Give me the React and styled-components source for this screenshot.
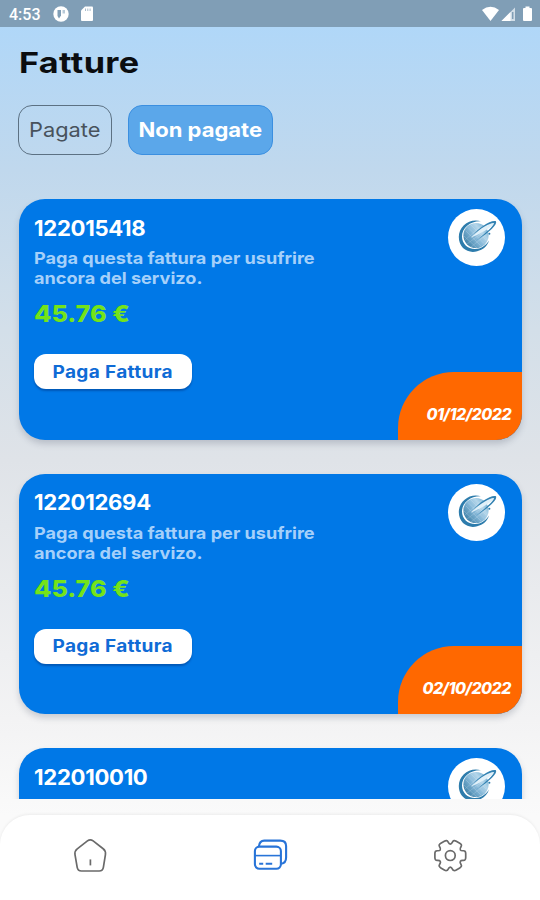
import React from 'react'
import styled, { createGlobalStyle } from 'styled-components'

const GlobalStyle = createGlobalStyle`
    * {
        box-sizing: border-box;
    }
    body {
        margin: 0;
        font-family: Inter, "Open Sans", sans-serif;
    }
`;

const Screen = styled.div`
    width: 540px;
    height: 900px;
    display: flex;
    flex-direction: column;
    overflow: hidden;
    background: linear-gradient(#b0d7f8 27px, #c0d8ed 170px, #d3dfe9 330px, #dfe3e8 460px, #f3f3f4 720px, #fafafa 815px);
`;

const StatusBar = styled.div`
    height: 27px;
    flex: none;
    display: flex;
    align-items: center;
    justify-content: space-between;
    padding: 0 7px 0 9px;
    background-color: #809eb6;
    color: white;
`;

const StatusGroup = styled.div`
    display: flex;
    align-items: center;
    gap: ${(props) => props.$gap}px;
`;

const Clock = styled.span`
    font-family: Roboto, sans-serif;
    font-size: 16px;
    font-weight: 500;
    line-height: 27px;
    padding-top: 2px;
`;

// Inter is narrow for this design, so labels are widened a little
const Wide = styled.span`
    display: inline-block;
    transform: scaleX(${(props) => props.$by});
    transform-origin: ${(props) => props.$from || 'left'} center;
`;

const Title = styled.h1`
    margin: 0;
    padding: 17px 0 0 19px;
    height: 78px;
    flex: none;
    font-size: 29px;
    line-height: 38px;
    font-weight: 700;
    letter-spacing: 0.3px;
    color: #0b0d10;
`;

const Tabs = styled.div`
    display: flex;
    flex: none;
    gap: 16px;
    padding-left: 18px;
    height: 94px;
`;

const Tab = styled.button`
    width: ${(props) => props.$width}px;
    height: 50px;
    padding: 0;
    border-radius: 14px;
    border: 1px solid ${(props) => (props.$active ? '#3b8fe0' : '#5c7183')};
    background-color: ${(props) => (props.$active ? '#5ba7ea' : 'transparent')};
    color: ${(props) => (props.$active ? 'white' : '#48525c')};
    font-family: inherit;
    font-size: 20px;
    font-weight: ${(props) => (props.$active ? 700 : 400)};
    white-space: nowrap;
`;

const List = styled.div`
    display: flex;
    flex-direction: column;
    flex: none;
    gap: 34px;
    height: 600px;
    padding: 0 18px 0 19px;
    overflow: hidden;
`;

const Card = styled.div`
    flex: none;
    display: flex;
    justify-content: space-between;
    height: 240.5px;
    border-radius: 26px;
    overflow: hidden;
    background-color: #0078e7;
    box-shadow: 0 4px 6px rgba(60, 70, 90, 0.22);
`;

const Info = styled.div`
    display: flex;
    flex-direction: column;
    align-items: flex-start;
    padding: 15.5px 0 0 15px;
`;

const Code = styled.div`
    font-size: 21.5px;
    font-weight: 700;
    line-height: 26px;
    color: white;
    letter-spacing: -0.3px;
`;

const Message = styled.div`
    margin-top: 7.5px;
    font-size: 16.5px;
    font-weight: 700;
    line-height: 20px;
    color: #a5d0fa;
    white-space: pre-line;
`;

const Price = styled.div`
    margin-top: 11px;
    font-size: 23px;
    font-weight: 800;
    line-height: 30px;
    color: #74e319;
`;

const PayButton = styled.button`
    margin-top: 25px;
    width: 158px;
    height: 35px;
    padding: 0;
    border: none;
    border-radius: 12px;
    background-color: white;
    box-shadow: 0 2px 2px rgba(0, 40, 110, 0.4);
    color: #0f6bd6;
    font-family: inherit;
    font-size: 17px;
    font-weight: 700;
    letter-spacing: 0.3px;
`;

const Side = styled.div`
    display: flex;
    flex-direction: column;
    align-items: flex-end;
    justify-content: space-between;
`;

const LogoCircle = styled.div`
    width: 57px;
    height: 57px;
    margin: 10.4px 17px 0 0;
    border-radius: 50%;
    background-color: white;
`;

const DueDate = styled.div`
    width: 124px;
    height: 68px;
    padding: 32px 11px 0 0;
    border-top-left-radius: 56px;
    background-color: #ff6800;
    color: white;
    font-size: 15.5px;
    font-style: italic;
    font-weight: 800;
    line-height: 22px;
    text-align: right;
    letter-spacing: -0.5px;
`;

const NavBar = styled.nav`
    flex: none;
    display: grid;
    grid-template-columns: repeat(3, 1fr);
    height: 86px;
    margin-top: 16px;
    padding: 22px 0 0;
    justify-items: center;
    align-items: start;
    border-radius: 30px 30px 0 0;
    background-color: white;
    box-shadow: 0 -1px 3px rgba(0, 0, 0, 0.06);
`;

const message = 'Paga questa fattura per usufrire\nancora del servizo.';

const invoices = [
    { code: '122015418', details: { price: '45.76 €', due: '01/12/2022' } },
    { code: '122012694', details: { price: '45.76 €', due: '02/10/2022' } },
    { code: '122010010' },
];

// closed outline through the points, each corner trimmed by r and rounded
const roundedPath = (points, r) => {
    const n = points.length;
    const toward = (a, b) => {
        const d = Math.hypot(b[0] - a[0], b[1] - a[1]);
        const t = Math.min(r / d, 0.5);
        return `${(a[0] + (b[0] - a[0]) * t).toFixed(2)} ${(a[1] + (b[1] - a[1]) * t).toFixed(2)}`;
    };
    return points.map((p, i) => {
        const prev = points[(i + n - 1) % n];
        const next = points[(i + 1) % n];
        return `${i ? 'L' : 'M'}${toward(p, prev)}Q${p[0].toFixed(2)} ${p[1].toFixed(2)} ${toward(p, next)}`;
    }).join('') + 'Z';
};

const polar = (r, deg) => [r * Math.cos(deg * Math.PI / 180), r * Math.sin(deg * Math.PI / 180)];

const gear = [0, 60, 120, 180, 240, 300].flatMap((a) => [
    polar(16.2, a - 18),
    polar(16.2, a + 18),
    polar(11.6, a + 24),
    polar(11.6, a + 36),
]);

const HomeIcon = () => (
    <svg width="36" height="38" viewBox="-18 -19 36 38" fill="none" stroke="#6a6a6a" strokeWidth="1.7">
        <path d={roundedPath([[0.3, -17.3], [16, -5], [12.8, 15], [-12.2, 15], [-15.6, -5]], 3.6)} />
        <path d="M0.4 3.4V9.4" />
    </svg>
);

const CardsIcon = () => (
    <svg width="36" height="38" viewBox="-0.7 0 36 38" fill="none" stroke="#2874d8" strokeWidth="2.1">
        <rect x="2.2" y="9.6" width="26" height="22.2" rx="4.5" />
        <path d="M6.2 9.4C6.6 5.6 8 3.6 11.5 3.6H27.5C31.5 3.6 33.4 5.4 33.4 9V20.5C33.4 24.5 32.2 26.2 28.5 26.8" />
        <path d="M2.2 18.6H28.2" strokeWidth="1.6" />
        <path d="M6.5 26.7H10.5M13 26.7H19.5" />
    </svg>
);

const GearIcon = () => (
    <svg width="36" height="38" viewBox="-18.3 -18.6 36 38" fill="none" stroke="#6a6a6a" strokeWidth="1.7">
        <path d={roundedPath(gear, 3)} />
        <circle r="4.9" />
    </svg>
);

const Logo = ({ id }) => (
    <svg width="57" height="57" viewBox="0 0 57 57">
        <defs>
            <linearGradient id={id} x1="0" y1="0.9" x2="1" y2="0.1">
                <stop offset="0" stopColor="#2d739c" />
                <stop offset="0.45" stopColor="#86b8d8" />
                <stop offset="0.7" stopColor="#b4d6ea" />
                <stop offset="1" stopColor="#5fa3cc" />
            </linearGradient>
        </defs>
        <circle cx="28" cy="26.5" r="12.6" fill={`url(#${id})`} />
        <g stroke="#e3f1f9" strokeWidth="0.4" fill="none" opacity="0.55">
            <path d="M18 22L33 37M20 18.5L36 34.5M23 16L38 31M16 27L29 39" />
            <path d="M17 31L34 16M19 35L39 20M23 38L39 25" />
        </g>
        <path d="M33 12.3C22 8.8 10.8 17 10.8 28C10.8 39 20.3 45 29.2 42.2C35 41 39.5 36.8 41 31.5C37.4 37 32.8 40 27 40C19.5 40 14 34.6 14 27.5C14 18.8 22.5 11.8 33 12.3Z" fill="#2d7cac" />
        <path d="M47.8 12.4C43 10.8 31 18.4 23 28.8C30 25 44.5 19 47.8 12.4Z" fill="#e0f0f9" />
        <path d="M25 26.5C30 19 43.5 10.4 48 12.3C49.5 15.8 42 22.8 28 31.8C38 23.8 46 16.5 46 14.2C44.5 12.8 33 18.4 25 26.5Z" fill="#3382b2" />
        <circle cx="41.4" cy="24.8" r="1" fill="#2d7cac" />
    </svg>
);

const Invoice = ({ code, details }) => (
    <Card>
        <Info>
            <Code><Wide $by={1.03}>{code}</Wide></Code>
            {details && (
                <>
                    <Message><Wide $by={1.098}>{message}</Wide></Message>
                    <Price><Wide $by={1.1}>{details.price}</Wide></Price>
                    <PayButton><Wide $by={1.12} $from="center">Paga Fattura</Wide></PayButton>
                </>
            )}
        </Info>
        <Side>
            <LogoCircle>
                <Logo id={`globe-${code}`} />
            </LogoCircle>
            {details && (
                <DueDate><Wide $by={1.03} $from="right">{details.due}</Wide></DueDate>
            )}
        </Side>
    </Card>
);

const App = () => {
    return (
        <Screen>
            <GlobalStyle />
            <StatusBar>
                <StatusGroup $gap={12}>
                    <Clock>4:53</Clock>
                    <svg width="16" height="16" viewBox="0 0 16 16">
                        <circle cx="8" cy="8" r="7.7" fill="white" />
                        <path d="M4.5 4H8V9.5L6 12.5L4.5 10Z" fill="#809eb6" />
                        <path d="M9.5 4H12V7.5H9.5Z" fill="#b9cad8" />
                    </svg>
                    <svg width="12" height="16" viewBox="0 0 12 16">
                        <path d="M4 0.5H11Q12 0.5 12 1.5V14Q12 15 11 15H1Q0 15 0 14V4.5Z" fill="white" />
                        <path d="M4.5 2.5V5M6.8 2.5V5M9.1 2.5V5" stroke="#a9bccc" />
                    </svg>
                </StatusGroup>
                <StatusGroup $gap={2}>
                    <svg width="17" height="16" viewBox="0 0 17 16">
                        <path d="M0 4Q8.5 -2.5 17 4L8.5 15Z" fill="white" />
                    </svg>
                    <svg width="15" height="16" viewBox="0 0 15 16">
                        <path d="M0.5 15L14 1.5V15Z" fill="#d2dee8" />
                        <path d="M0.5 15L9.5 6V15Z" fill="white" />
                        <path d="M11.7 6V13" stroke="#809eb6" strokeWidth="1.5" />
                    </svg>
                    <svg width="15" height="16" viewBox="0 0 15 16">
                        <path d="M7.5 0.5H11.5V2H13Q14 2 14 3V14Q14 15 13 15H6Q5 15 5 14V3Q5 2 6 2H7.5Z" fill="white" />
                    </svg>
                </StatusGroup>
            </StatusBar>
            <Title><Wide $by={1.18}>Fatture</Wide></Title>
            <Tabs>
                <Tab $width={94}><Wide $by={1.09} $from="center">Pagate</Wide></Tab>
                <Tab $width={145} $active><Wide $by={1.1} $from="center">Non pagate</Wide></Tab>
            </Tabs>
            <List>
                {invoices.map((invoice) => (
                    <Invoice key={invoice.code} {...invoice} />
                ))}
            </List>
            <NavBar>
                <HomeIcon />
                <CardsIcon />
                <GearIcon />
            </NavBar>
        </Screen>
    )
}
export default App;
